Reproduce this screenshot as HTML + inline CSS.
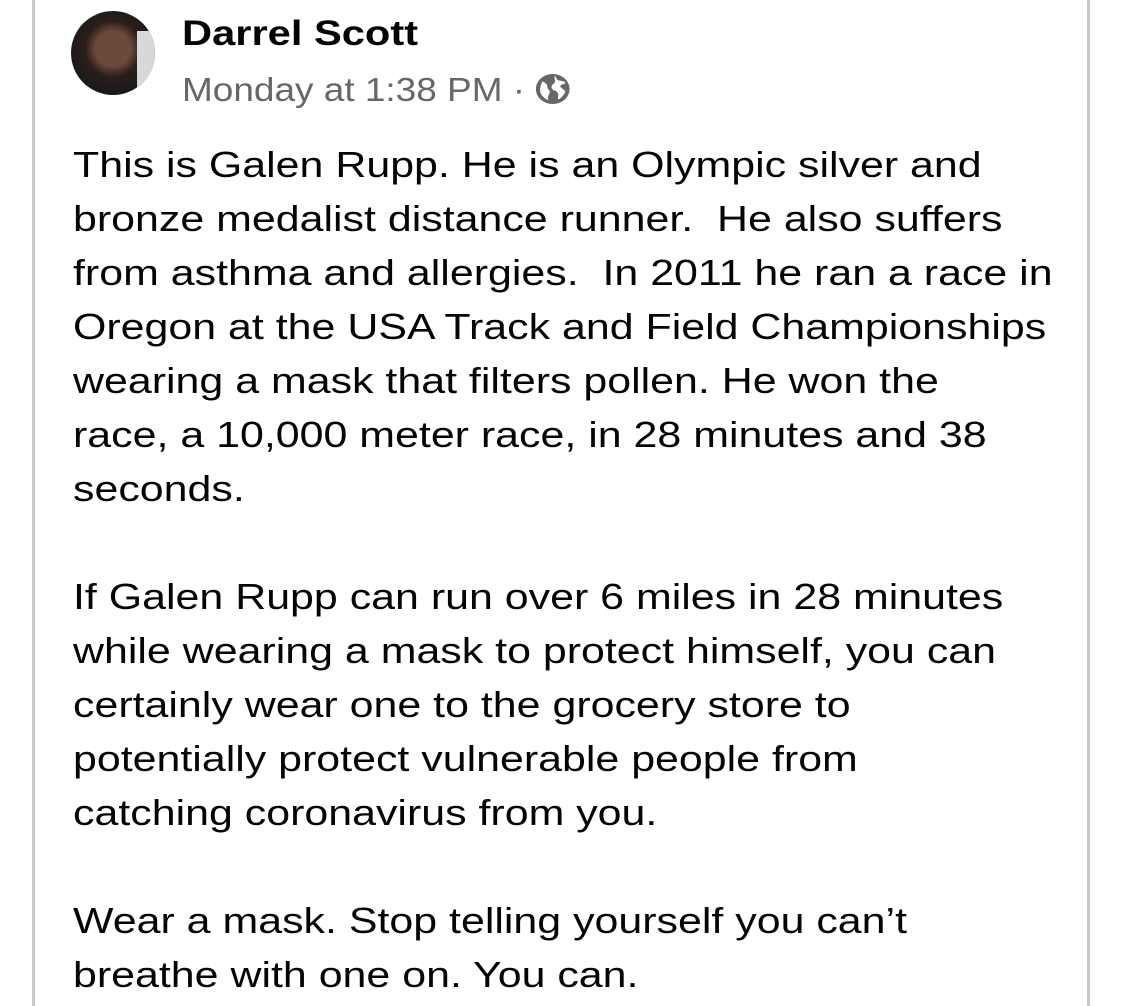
<!DOCTYPE html>
<html><head><style>
html,body{margin:0;padding:0;background:#fff;width:1125px;height:1006px;overflow:hidden}
body{position:relative;font-family:"Liberation Sans",sans-serif}
.bl{position:absolute;left:32px;top:0;width:3px;height:1006px;background:#c9c9c9}
.br{position:absolute;left:1087px;top:0;width:3px;height:1006px;background:#c9c9c9}
.av{position:absolute;left:71px;top:11px;width:84px;height:84px;border-radius:50%;background:radial-gradient(circle at 50% 45%,#6b4a3a 0 28%,#2a1e1a 45%,#1a1a1a 70%);overflow:hidden}
.av:after{content:"";position:absolute;right:0;top:20px;width:18px;height:60px;background:#d8d8d8}
.name{position:absolute;left:182px;top:14px;font-size:35px;font-weight:bold;color:#050505;transform:scaleX(1.19);transform-origin:left}
.time{position:absolute;left:182px;top:71px;font-size:33px;color:#65676b;white-space:nowrap;transform:scaleX(1.12);transform-origin:left}
.txt{position:absolute;left:73px;top:138px;font-size:36px;line-height:54px;color:#050505;white-space:nowrap;transform:scaleX(1.192);transform-origin:left top}
</style></head><body>
<div class="bl"></div><div class="br"></div>
<div class="av"></div>
<div class="name">Darrel Scott</div>
<div class="time">Monday at 1:38 PM · <svg width="32" height="34" viewBox="0 0 34 34" style="vertical-align:-5px"><circle cx="17" cy="17" r="16" fill="#65676b"/><path d="M7 9c3 1 5 3 5 6s3 3 2 6-2 5-1 8c-4-2-8-6-8-11 0-3 1-6 2-9zM19 3c2 2 1 4 4 5s5 0 6 3c-2 1-4 1-5 3 1 3 4 3 5 6-2 4-4 7-7 8 0-4 1-6-1-8s-4-1-5-4 2-4 3-6-1-4 0-7z" fill="#fff"/></svg></div>
<div class="txt">This is Galen Rupp. He is an Olympic silver and<br>bronze medalist distance runner.&nbsp; He also suffers<br>from asthma and allergies.&nbsp; In 2011 he ran a race in<br>Oregon at the USA Track and Field Championships<br>wearing a mask that filters pollen. He won the<br>race, a 10,000 meter race, in 28 minutes and 38<br>seconds.<br><br>If Galen Rupp can run over 6 miles in 28 minutes<br>while wearing a mask to protect himself, you can<br>certainly wear one to the grocery store to<br>potentially protect vulnerable people from<br>catching coronavirus from you.<br><br>Wear a mask. Stop telling yourself you can’t<br>breathe with one on. You can.</div>
</body></html>
